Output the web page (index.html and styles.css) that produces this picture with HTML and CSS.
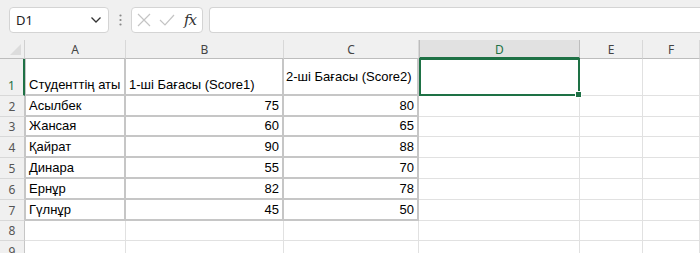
FILE: index.html
```html
<!DOCTYPE html>
<html lang="kk">
<head>
  <meta charset="UTF-8" />
  <title>Book1 - Excel</title>
  <link rel="stylesheet" href="styles.css">
</head>
<body>
  <div class="toolbar">
    <div class="name-box">
      <span>D1</span>
      <svg width="12" height="8" viewBox="0 0 12 8"><path d="M1.5 1.5 L6 6 L10.5 1.5" fill="none" stroke="#333" stroke-width="1.3"/></svg>
    </div>
    <div class="grip">
      <svg width="3" height="12" viewBox="0 0 3 12"><circle cx="1.5" cy="1.5" r="1.1" fill="#888"/><circle cx="1.5" cy="6" r="1.1" fill="#888"/><circle cx="1.5" cy="10.5" r="1.1" fill="#888"/></svg>
    </div>
    <div class="fx-box">
      <svg width="16" height="16" viewBox="0 0 16 16"><path d="M2 2 L14 14 M14 2 L2 14" stroke="#c4c4c4" stroke-width="1.2" fill="none"/></svg>
      <svg width="18" height="16" viewBox="0 0 18 16"><path d="M2 8 L7 13 L16 3" stroke="#c4c4c4" stroke-width="1.2" fill="none"/></svg>
      <span class="fx">fx</span>
    </div>
    <div class="formula-input"></div>
  </div>

  <div class="sheet" id="sheet"></div>

  <script>
    const cols = ["A", "B", "C", "D", "E", "F"];
    const rows = [
      ["Студенттің аты", "1-ші Бағасы (Score1)", "2-ші Бағасы (Score2)"],
      ["Асылбек", 75, 80],
      ["Жансая", 60, 65],
      ["Қайрат", 90, 88],
      ["Динара", 55, 70],
      ["Ернұр", 82, 78],
      ["Гүлнұр", 45, 50],
      [],
      []
    ];

    const sheet = document.getElementById("sheet");

    function addCell(cls, text) {
      const div = document.createElement("div");
      div.className = cls;
      if (text !== undefined) div.textContent = text;
      sheet.appendChild(div);
      return div;
    }

    // column headers
    addCell("corner");
    cols.forEach(c => addCell(c === "D" ? "col-head active" : "col-head", c));

    rows.forEach((row, r) => {
      addCell(r === 0 ? "row-head active" : "row-head", r + 1);
      cols.forEach((c, i) => {
        let cls = "cell";
        const val = row[i];
        if (r < 7 && i < 3) cls += " tbl";
        if (i === 0) cls += " first";
        if (typeof val === "number") cls += " num";
        if (r === 0 && i === 2) cls += " mid";
        if (r === 0 && i === 3) cls += " selected";
        addCell(cls, val);
      });
    });
  </script>
</body>
</html>
```

FILE: styles.css
```css
:root {
  --green: #1e7145;
  --grid: #e1e1e1;
  --border: #c6c6c6;
  --chrome: #f0f0f0;
}

* {
  box-sizing: border-box;
}

body {
  margin: 0;
  background: var(--chrome);
  font-family: "Liberation Sans", Arial, sans-serif;
  overflow: hidden;
}

.toolbar {
  height: 40px;
  display: flex;
  align-items: flex-start;
  padding: 7px 0 0 9px;
}

.name-box {
  width: 100px;
  height: 26px;
  background: #fff;
  border: 1px solid #d4d4d4;
  border-radius: 4px;
  display: flex;
  align-items: center;
  justify-content: space-between;
  padding: 0 6px 0 6px;
  font-family: "Noto Sans", sans-serif;
  font-size: 13px;
  color: #222;
}

.grip {
  width: 22px;
  height: 26px;
  display: flex;
  align-items: center;
  justify-content: center;
}

.fx-box {
  width: 72px;
  height: 26px;
  background: #fff;
  border: 1px solid #d4d4d4;
  border-radius: 4px;
  display: flex;
  align-items: center;
  gap: 6px;
  padding: 0 0 0 4px;
}

.fx {
  font-family: "DejaVu Serif", serif;
  font-style: italic;
  font-size: 15px;
  color: #333;
  letter-spacing: -1px;
  margin-left: 2px;
}

.formula-input {
  flex: 1;
  height: 26px;
  margin-left: 6px;
  background: #fff;
  border-top: 1px solid #d4d4d4;
  border-bottom: 1px solid #d4d4d4;
  border-left: 1px solid #d4d4d4;
  border-radius: 4px 0 0 4px;
}

.sheet {
  display: grid;
  grid-template-columns: 25px 101px 158px 135px 161px 63px 1fr;
  grid-template-rows: 19px 37px 21px 20px 21px 21px 21px 21px 20px 21px;
  background: #fff;
}

.corner {
  background: var(--chrome);
  border-bottom: 1px solid #bdbdbd;
  border-right: 1px solid #d0d0d0;
  position: relative;
}

.corner::after {
  content: "";
  position: absolute;
  right: 3px;
  bottom: 3px;
  border-style: solid;
  border-width: 0 0 11px 11px;
  border-color: transparent transparent #dcdcdc transparent;
}

.col-head {
  background: var(--chrome);
  border-bottom: 1px solid #bdbdbd;
  border-right: 1px solid #d8d8d8;
  font-family: "Noto Sans", sans-serif;
  font-size: 12px;
  color: #444;
  text-align: center;
  line-height: 19px;
}

.col-head.active {
  background: #e1e1e1;
  color: var(--green);
  border-bottom: 2px solid var(--green);
  border-right: 1px solid #bdbdbd;
  border-left: 1px solid #bdbdbd;
}

.row-head {
  background: var(--chrome);
  border-right: 1px solid #c6c6c6;
  border-bottom: 1px solid #d8d8d8;
  font-family: "Noto Sans", sans-serif;
  font-size: 12px;
  color: #555;
  display: flex;
  align-items: flex-end;
  justify-content: center;
  padding-bottom: 1px;
}

.row-head.active {
  color: var(--green);
  border-right: 2px solid var(--green);
}

.cell {
  border-right: 1px solid var(--grid);
  border-bottom: 1px solid var(--grid);
  font-size: 13px;
  color: #000;
  display: flex;
  align-items: flex-end;
  padding: 0 3px 2px 3px;
  white-space: nowrap;
  overflow: visible;
}

.cell.tbl {
  border-right: 2px solid var(--border);
  border-bottom: 2px solid var(--border);
}

.cell.tbl.first {
  border-left: 1px solid var(--border);
}

.cell.num {
  justify-content: flex-end;
}

.cell.mid {
  align-items: center;
  padding-bottom: 0;
  padding-left: 2px;
}

.cell.selected {
  position: relative;
  border: 2px solid var(--green);
  margin: -1px 0 0 0;
}

.cell.selected::after {
  content: "";
  position: absolute;
  right: -4px;
  bottom: -4px;
  width: 5px;
  height: 5px;
  background: var(--green);
  border: 1px solid #fff;
}
```
